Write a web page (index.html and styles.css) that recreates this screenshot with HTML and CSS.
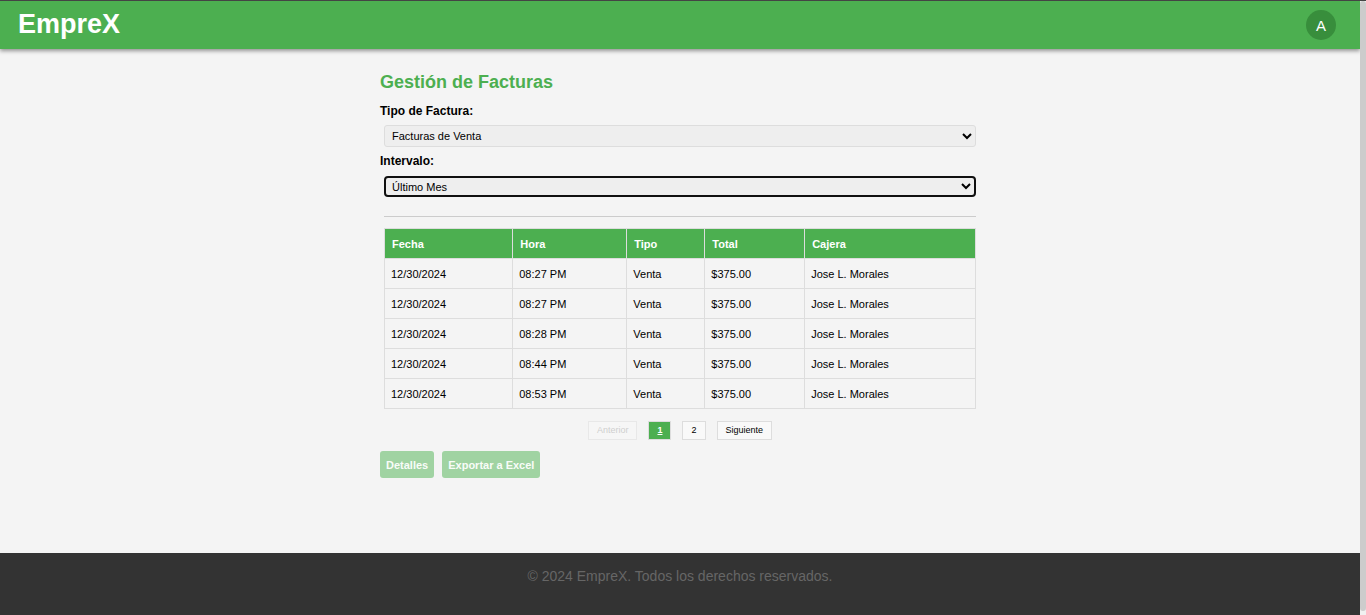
FILE: index.html
```html
<!DOCTYPE html>
<html lang="es">
<head>
<meta charset="utf-8">
<meta name="viewport" content="width=device-width, initial-scale=1">
<title>EmpreX - Gestión de Facturas</title>
<link rel="stylesheet" href="styles.css">
</head>
<body>
<div class="page">
  <header class="topbar">
    <div class="brand">EmpreX</div>
    <button class="avatar" type="button" aria-label="Cuenta A">A</button>
  </header>
  <main class="content">
    <h1 class="title">Gestión de Facturas</h1>
    <div class="field">
      <label class="label" for="tipo">Tipo de Factura:</label>
      <select class="select" id="tipo"><option>Facturas de Venta</option></select>
    </div>
    <div class="field">
      <label class="label" for="intervalo">Intervalo:</label>
      <select class="select select-active" id="intervalo"><option>Último Mes</option></select>
    </div>
    <section class="results">
      <table class="invoices">
        <colgroup><col class="col-date"><col class="col-time"><col class="col-type"><col class="col-total"><col class="col-cashier"></colgroup>
        <thead><tr><th>Fecha</th><th>Hora</th><th>Tipo</th><th>Total</th><th>Cajera</th></tr></thead>
        <tbody>
          <tr><td>12/30/2024</td><td>08:27 PM</td><td>Venta</td><td>$375.00</td><td>Jose L. Morales</td></tr>
          <tr><td>12/30/2024</td><td>08:27 PM</td><td>Venta</td><td>$375.00</td><td>Jose L. Morales</td></tr>
          <tr><td>12/30/2024</td><td>08:28 PM</td><td>Venta</td><td>$375.00</td><td>Jose L. Morales</td></tr>
          <tr><td>12/30/2024</td><td>08:44 PM</td><td>Venta</td><td>$375.00</td><td>Jose L. Morales</td></tr>
          <tr><td>12/30/2024</td><td>08:53 PM</td><td>Venta</td><td>$375.00</td><td>Jose L. Morales</td></tr>
        </tbody>
      </table>
      <nav class="pager" aria-label="Paginación">
        <button class="page-btn" type="button" disabled>Anterior</button>
        <button class="page-btn page-current" type="button" aria-current="page">1</button>
        <button class="page-btn" type="button">2</button>
        <button class="page-btn" type="button">Siguiente</button>
      </nav>
    </section>
    <div class="actions">
      <button class="action" type="button" disabled>Detalles</button>
      <button class="action" type="button" disabled>Exportar a Excel</button>
    </div>
  </main>
  <footer class="footer">© 2024 EmpreX. Todos los derechos reservados.</footer>
</div>
<div class="scroll-track"><div class="scroll-thumb"></div></div>
</body>
</html>
```
FILE: styles.css
```css
* {
  box-sizing: border-box;
}

body {
  display: flex;
  min-height: 100vh;
  margin: 0;
  border-top: 1px solid #444;
  background: #f4f4f4;
  color: #000;
  font-family: "Liberation Sans", Arial, sans-serif;
  font-size: 11px;
}

button,
select {
  font-family: inherit;
}

.page {
  display: flex;
  flex: 1;
  flex-direction: column;
  min-width: 0;
}

.topbar {
  display: flex;
  align-items: center;
  justify-content: space-between;
  height: 48px;
  padding: 0 24px 0 18px;
  background: #4caf50;
  box-shadow: 0 2px 4px rgba(0, 0, 0, 0.4);
}

.brand {
  padding-bottom: 2px;
  color: #fff;
  font-size: 27px;
  font-weight: bold;
}

.avatar {
  width: 30px;
  height: 30px;
  padding: 0;
  border: 0;
  border-radius: 50%;
  background: #388e3c;
  color: #fff;
  font-size: 15px;
}

.content {
  display: flex;
  flex: 1;
  flex-direction: column;
  width: 100%;
  max-width: 600px;
  margin: 0 auto;
  padding-top: 22px;
}

.title {
  margin: 0 0 10px;
  color: #4caf50;
  font-size: 18px;
  line-height: 22px;
}

.field {
  display: flex;
  flex-direction: column;
  height: 50px;
}

.label {
  margin-bottom: 6px;
  color: #000;
  font-size: 12px;
  font-weight: bold;
  line-height: 16px;
}

.select {
  height: 22px;
  margin: 0 4px;
  padding: 0 0 0 3px;
  border: 1px solid #ddd;
  border-radius: 3px;
  background: #eee;
  color: #000;
  font-size: 11px;
}

.select-active {
  height: 21px;
  margin-top: 1px;
  padding-left: 2px;
  border: 2px solid #101010;
  border-radius: 4px;
}

.results {
  margin: 13px 4px 0;
  padding-top: 11px;
  border-top: 1px solid #ccc;
}

.invoices {
  width: 100%;
  border-collapse: collapse;
  table-layout: fixed;
}

.col-date {
  width: 21.7%;
}

.col-time {
  width: 19.3%;
}

.col-type {
  width: 13.2%;
}

.col-total {
  width: 16.9%;
}

.invoices th,
.invoices td {
  height: 30px;
  padding: 1px 6px 0;
  border: 1px solid #ddd;
  text-align: left;
}

.invoices th {
  padding-left: 7px;
  background: #4caf50;
  color: #fff;
}

.pager {
  display: flex;
  justify-content: center;
  gap: 11px;
  margin-top: 12px;
}

.page-btn {
  height: 19px;
  padding: 0 8px 1px;
  border: 1px solid #ddd;
  background: #f9f9f9;
  color: #000;
  font-size: 9px;
}

.page-btn:disabled {
  opacity: 0.5;
  color: #aaa;
}

.page-current {
  background: #4caf50;
  color: #fff;
  font-weight: bold;
  text-decoration: underline;
}

.actions {
  display: flex;
  gap: 8px;
  margin-top: 11px;
}

.action {
  height: 27px;
  padding: 1px 6px 0;
  border: 0;
  border-radius: 3px;
  background: #a0d3a2;
  color: #f8fcf8;
  font-size: 11px;
  font-weight: bold;
}

.footer {
  height: 62px;
  padding-top: 14px;
  background: #333;
  color: #666;
  font-size: 14px;
  line-height: 18px;
  text-align: center;
}

.scroll-track {
  display: flex;
  width: 6px;
  padding-bottom: 4px;
  background: #f1f1f1;
}

.scroll-thumb {
  flex: 1;
  border-radius: 3px;
  background: #ccc;
}
```
